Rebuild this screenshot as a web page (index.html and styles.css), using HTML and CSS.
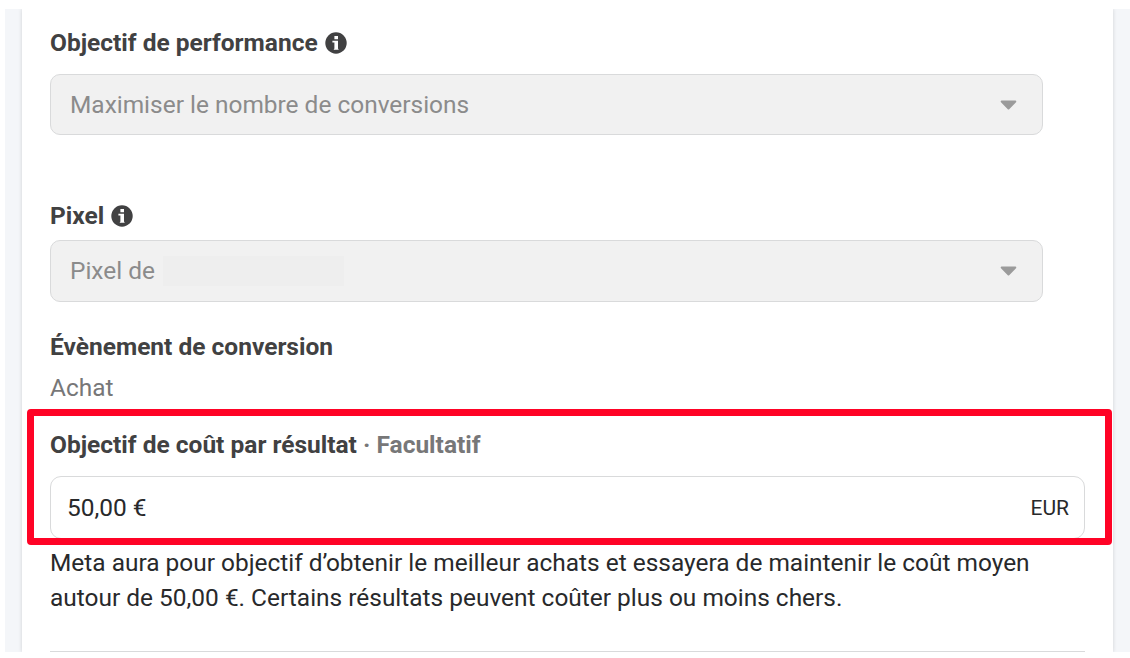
FILE: index.html
```
<!DOCTYPE html>
<html lang="fr">
<head>
    <meta charset="UTF-8">
    <meta name="viewport" content="width=device-width, initial-scale=1.0">
    <title>Objectif de performance</title>
    <link rel="stylesheet" href="styles.css">
</head>
<body>
    <div class="page">
        <main class="card">
            <div class="field">
                <h2 class="label"><span>Objectif de performance</span>
                    <svg class="info-icon" viewBox="0 0 22 22">
                        <circle cx="11" cy="11" r="10.7"/>
                        <path d="M9.4 4h3.6v3.2H9.4zM7.4 8.8H13v7.6l.8 1.4H8.6l.8-1.4v-5.8h-2z"/>
                    </svg>
                </h2>
                <div class="select">
                    <span>Maximiser le nombre de conversions</span>
                    <svg class="caret" viewBox="0 0 17 10"><path d="M1.7 1.5h13.6L8.5 8.5z"/></svg>
                </div>
            </div>

            <div class="field field-pixel">
                <h2 class="label"><span>Pixel</span>
                    <svg class="info-icon" viewBox="0 0 22 22">
                        <circle cx="11" cy="11" r="10.7"/>
                        <path d="M9.4 4h3.6v3.2H9.4zM7.4 8.8H13v7.6l.8 1.4H8.6l.8-1.4v-5.8h-2z"/>
                    </svg>
                </h2>
                <div class="select">
                    <span>Pixel de</span>
                    <span class="redacted"></span>
                    <svg class="caret" viewBox="0 0 17 10"><path d="M1.7 1.5h13.6L8.5 8.5z"/></svg>
                </div>
            </div>

            <div class="field-event">
                <h2 class="label"><span>Évènement de conversion</span></h2>
                <p class="value">Achat</p>
            </div>

            <div class="field-cost">
                <h2 class="label"><span>Objectif de coût par résultat <span class="optional">· Facultatif</span></span></h2>
                <div class="input">
                    <span>50,00 €</span>
                    <span class="currency">EUR</span>
                </div>
                <div class="highlight"></div>
            </div>

            <p class="help">Meta aura pour objectif d’obtenir le meilleur achats et essayera de maintenir le coût moyen<br>autour de 50,00 €. Certains résultats peuvent coûter plus ou moins chers.</p>
            <hr class="divider">
        </main>
    </div>
</body>
</html>
```

FILE: styles.css
```
:root {
    --text-color: #28292b;
    --label-color: #414142;
    --muted-color: #777778;
    --disabled-color: #8b8b8b;
    --border-color: #d9dadb;
    --highlight-color: #ff0326;
}

* {
    margin: 0;
    padding: 0;
    box-sizing: border-box;
}

body {
    background-color: #ffffff;
    color: var(--text-color);
    font-family: Roboto, sans-serif;
    font-size: 24.45px;
    line-height: 28px;
    overflow: hidden;
}

.page {
    height: 643px;
    margin: 9px 0 0 5px;
    padding: 0 17px;
    background-color: #f4f6f9;
    overflow: hidden;
}

.card {
    height: 643px;
    padding: 20px 28px 0;
    background-color: #ffffff;
    box-shadow: 0 0 4px rgba(0, 0, 0, 0.15);
}

.label {
    display: flex;
    align-items: center;
    gap: 7px;
    height: 28px;
    color: var(--label-color);
    font-size: 24.5px;
    font-weight: 700;
    white-space: nowrap;
}

.info-icon {
    width: 22px;
    height: 22px;
}

.info-icon circle {
    fill: var(--label-color);
}

.info-icon path {
    fill: #ffffff;
}

.select {
    display: flex;
    align-items: center;
    width: 993px;
    height: 61px;
    margin-top: 17px;
    padding: 0 25px 0 19px;
    background-color: #f1f1f1;
    border: 1px solid var(--border-color);
    border-radius: 10px;
    color: var(--disabled-color);
}

.caret {
    width: 17px;
    height: 10px;
    margin-left: auto;
}

.caret path {
    fill: #9b9b9b;
    stroke: #9b9b9b;
    stroke-width: 2;
    stroke-linejoin: round;
}

.field-pixel {
    margin-top: 67px;
}

.field-pixel .select {
    height: 62px;
    margin-top: 10px;
}

.redacted {
    width: 181px;
    height: 30px;
    margin-left: 8px;
    background-color: #eeeeee;
}

.field-event {
    margin-top: 31px;
}

.value {
    margin-top: 13px;
    color: var(--muted-color);
}

.field-cost {
    position: relative;
    margin-top: 29px;
}

.optional {
    color: var(--muted-color);
}

.input {
    display: flex;
    align-items: center;
    justify-content: space-between;
    width: 1035px;
    height: 63px;
    margin-top: 17px;
    padding: 0 15px 0 16px;
    border: 1px solid var(--border-color);
    border-radius: 11px;
}

.currency {
    font-size: 21px;
}

/* red frame drawn over the cost field */
.highlight {
    position: absolute;
    top: -22px;
    left: -23px;
    width: 1085px;
    height: 136px;
    border: 7px solid var(--highlight-color);
    border-radius: 4px;
}

.help {
    margin-top: 6px;
    line-height: 35px;
    white-space: nowrap;
}

.divider {
    width: 1035px;
    margin-top: 36px;
    border: none;
    border-top: 1px solid var(--border-color);
}
```
